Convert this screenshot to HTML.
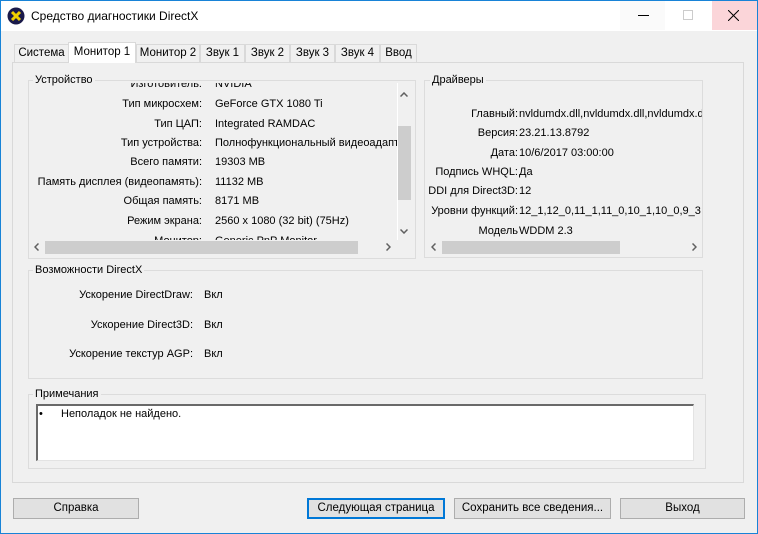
<!DOCTYPE html>
<html><head><meta charset="utf-8"><style>
*{margin:0;padding:0;box-sizing:border-box}
body{width:758px;height:534px;position:relative;overflow:hidden;background:#f0f0f0;font-family:"Liberation Sans",sans-serif;font-size:11px;color:#000}
.a{position:absolute}
.win{left:0;top:0;width:758px;height:534px;border:1px solid #1883d7}
.title{left:1px;top:1px;width:756px;height:30px;background:#fff}
.tab{position:absolute;top:44px;height:18px;border:1px solid #d9d9d9;border-bottom:none;background:#f0f0f0;text-align:center;line-height:16px;font-size:11.5px}
.page{left:12px;top:62px;width:732px;height:421px;border:1px solid #d9d9d9;background:#f0f0f0}
.grp{position:absolute;border:1px solid #dcdcdc}
.gl{position:absolute;background:#f0f0f0;padding:0 2px;font-size:11px;line-height:12px}
.r{position:absolute;text-align:right;white-space:nowrap}
.v{position:absolute;white-space:nowrap}
.btn{position:absolute;top:498px;height:21px;border:1px solid #adadad;background:#e1e1e1;text-align:center;line-height:19px;font-size:11.5px}
svg.ar{position:absolute}
</style></head><body>
<div class="a win"></div>
<div class="a title"></div>
<svg class="a" style="left:7px;top:7px" width="18" height="18" viewBox="0 0 18 18"><circle cx="9" cy="9" r="8.5" fill="#1a1a4a"/><path d="M5 5L13 13M13 5L5 13" stroke="#f0d000" stroke-width="3"/></svg>
<div class="a" style="left:31px;top:9px;font-size:12px">Средство диагностики DirectX</div>
<div class="a" style="left:620px;top:1px;width:45px;height:29px;background:#fafafa"></div>
<div class="a" style="left:638px;top:15px;width:11px;height:1px;background:#000"></div>
<div class="a" style="left:683px;top:10px;width:10px;height:10px;border:1px solid #ccc"></div>
<div class="a" style="left:712px;top:1px;width:45px;height:29px;background:#fbd5d9"></div>
<svg class="a" style="left:728px;top:10px" width="11" height="11"><path d="M0 0L11 11M11 0L0 11" stroke="#000" stroke-width="1"/></svg>

<div class="a page"></div>
<div class="tab" style="left:14px;width:55px">Система</div>
<div class="tab" style="left:68px;top:42px;height:21px;width:68px;background:#fff;z-index:2;line-height:18px">Монитор 1</div>
<div class="tab" style="left:136px;width:64px">Монитор 2</div>
<div class="tab" style="left:200px;width:45px">Звук 1</div>
<div class="tab" style="left:245px;width:45px">Звук 2</div>
<div class="tab" style="left:290px;width:45px">Звук 3</div>
<div class="tab" style="left:335px;width:45px">Звук 4</div>
<div class="tab" style="left:380px;width:37px">Ввод</div>

<!-- Device -->
<div class="grp" style="left:28px;top:80px;width:388px;height:179px"></div>
<div class="a" style="left:30px;top:83px;width:367px;height:157px;overflow:hidden">
<div class="r" style="left:0;width:172px;top:-5px">Изготовитель:</div><div class="v" style="left:185px;top:-5px">NVIDIA</div>
<div class="r" style="left:0;width:172px;top:15px">Тип микросхем:</div><div class="v" style="left:185px;top:15px">GeForce GTX 1080 Ti</div>
<div class="r" style="left:0;width:172px;top:35px">Тип ЦАП:</div><div class="v" style="left:185px;top:35px">Integrated RAMDAC</div>
<div class="r" style="left:0;width:172px;top:54px">Тип устройства:</div><div class="v" style="left:185px;top:54px">Полнофункциональный видеоадаптер</div>
<div class="r" style="left:0;width:172px;top:73px">Всего памяти:</div><div class="v" style="left:185px;top:73px">19303 MB</div>
<div class="r" style="left:0;width:172px;top:93px">Память дисплея (видеопамять):</div><div class="v" style="left:185px;top:93px">11132 MB</div>
<div class="r" style="left:0;width:172px;top:112px">Общая память:</div><div class="v" style="left:185px;top:112px">8171 MB</div>
<div class="r" style="left:0;width:172px;top:132px">Режим экрана:</div><div class="v" style="left:185px;top:132px">2560 x 1080 (32 bit) (75Hz)</div>
<div class="r" style="left:0;width:172px;top:152px">Монитор:</div><div class="v" style="left:185px;top:152px">Generic PnP Monitor</div>
</div>
<div class="a" style="left:397px;top:83px;width:1px;height:157px;background:#fff"></div>
<div class="a" style="left:398px;top:126px;width:13px;height:74px;background:#cdcdcd"></div>
<svg class="ar" style="left:400px;top:92px" width="8" height="5"><path d="M0.5 4.5L4 1L7.5 4.5" stroke="#606060" stroke-width="1.5" fill="none"/></svg>
<svg class="ar" style="left:400px;top:229px" width="8" height="5"><path d="M0.5 0.5L4 4L7.5 0.5" stroke="#606060" stroke-width="1.5" fill="none"/></svg>
<div class="a" style="left:45px;top:241px;width:313px;height:13px;background:#cdcdcd"></div>
<svg class="ar" style="left:34px;top:243px" width="5" height="8"><path d="M4.5 0.5L1 4L4.5 7.5" stroke="#606060" stroke-width="1.5" fill="none"/></svg>
<svg class="ar" style="left:386px;top:243px" width="5" height="8"><path d="M0.5 0.5L4 4L0.5 7.5" stroke="#606060" stroke-width="1.5" fill="none"/></svg>
<div class="gl" style="left:33px;top:74px">Устройство</div>

<!-- Drivers -->
<div class="grp" style="left:424px;top:80px;width:279px;height:178px"></div>
<div class="a" style="left:425px;top:83px;width:277px;height:157px;overflow:hidden">
<div class="r" style="left:0;width:93px;top:25px">Главный:</div><div class="v" style="left:94px;top:25px">nvldumdx.dll,nvldumdx.dll,nvldumdx.dll</div>
<div class="r" style="left:0;width:93px;top:44px">Версия:</div><div class="v" style="left:94px;top:44px">23.21.13.8792</div>
<div class="r" style="left:0;width:93px;top:64px">Дата:</div><div class="v" style="left:94px;top:64px">10/6/2017 03:00:00</div>
<div class="r" style="left:0;width:93px;top:83px">Подпись WHQL:</div><div class="v" style="left:94px;top:83px">Да</div>
<div class="r" style="left:0;width:93px;top:102px">DDI для Direct3D:</div><div class="v" style="left:94px;top:102px">12</div>
<div class="r" style="left:0;width:93px;top:122px">Уровни функций:</div><div class="v" style="left:94px;top:122px">12_1,12_0,11_1,11_0,10_1,10_0,9_3</div>
<div class="r" style="left:0;width:93px;top:142px">Модель</div><div class="v" style="left:94px;top:142px">WDDM 2.3</div>
</div>
<div class="a" style="left:442px;top:241px;width:178px;height:13px;background:#cdcdcd"></div>
<svg class="ar" style="left:431px;top:243px" width="5" height="8"><path d="M4.5 0.5L1 4L4.5 7.5" stroke="#606060" stroke-width="1.5" fill="none"/></svg>
<svg class="ar" style="left:692px;top:243px" width="5" height="8"><path d="M0.5 0.5L4 4L0.5 7.5" stroke="#606060" stroke-width="1.5" fill="none"/></svg>
<div class="gl" style="left:430px;top:74px">Драйверы</div>

<!-- Caps -->
<div class="grp" style="left:28px;top:270px;width:675px;height:109px"></div>
<div class="gl" style="left:33px;top:264px">Возможности DirectX</div>
<div class="r" style="left:30px;width:163px;top:289px">Ускорение DirectDraw:</div><div class="v" style="left:204px;top:289px">Вкл</div>
<div class="r" style="left:30px;width:163px;top:319px">Ускорение Direct3D:</div><div class="v" style="left:204px;top:319px">Вкл</div>
<div class="r" style="left:30px;width:163px;top:348px">Ускорение текстур AGP:</div><div class="v" style="left:204px;top:348px">Вкл</div>

<!-- Notes -->
<div class="grp" style="left:28px;top:394px;width:678px;height:75px"></div>
<div class="gl" style="left:33px;top:388px">Примечания</div>
<div class="a" style="left:36px;top:404px;width:658px;height:57px;background:#fff;border-top:2px solid #696969;border-left:2px solid #696969;border-right:1px solid #e3e3e3;border-bottom:1px solid #e3e3e3"></div>
<div class="v" style="left:39px;top:408px">•</div>
<div class="v" style="left:61px;top:408px">Неполадок не найдено.</div>

<div class="btn" style="left:13px;width:126px">Справка</div>
<div class="btn" style="left:307px;width:138px;border:2px solid #0078d7;line-height:17px">Следующая страница</div>
<div class="btn" style="left:454px;width:157px">Сохранить все сведения...</div>
<div class="btn" style="left:620px;width:125px">Выход</div>
</body></html>
